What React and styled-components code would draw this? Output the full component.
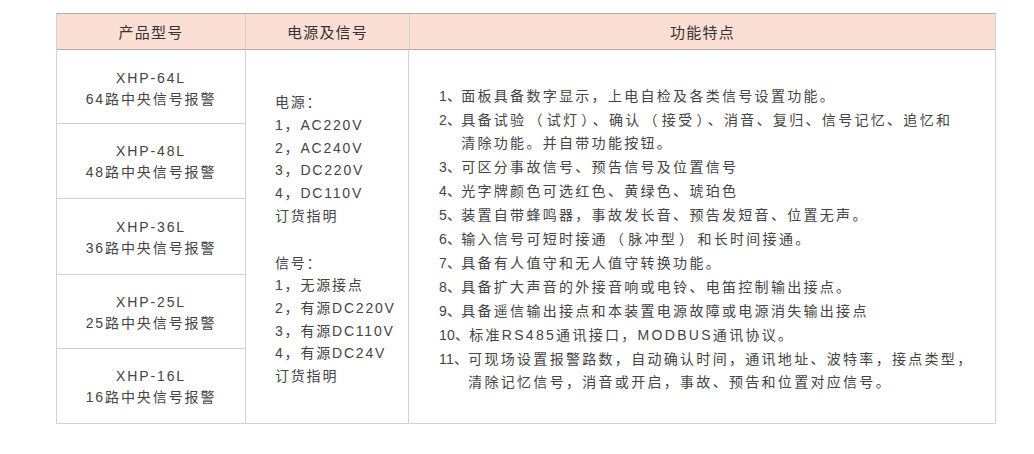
import React from 'react';
import styled, { createGlobalStyle } from 'styled-components';

const GlobalStyle = createGlobalStyle`
    body {
        margin: 0;
        background: #fff;
        font-family: 'Liberation Sans', 'Noto Sans CJK SC', sans-serif;
    }
`;

const Page = styled.div`
    padding: 13px 0 0 56px;
    width: 1034px;
    height: 454px;
    box-sizing: border-box;
`;

const Table = styled.div`
    width: 940px;
    border: 1px solid #d2d2d2;
    border-top-color: #b3aba6;
    box-sizing: border-box;
`;

const Row = styled.div`
    display: grid;
    grid-template-columns: 188px 164px 1fr;
`;

const HeadCell = styled.div`
    height: 35px;
    display: flex;
    align-items: center;
    justify-content: center;
    background: #fcdfd4;
    border-bottom: 1px solid #b3aba6;
    border-left: ${(props) => (props.first ? 'none' : '1px solid #d8cfca')};
    font-size: 15px;
    letter-spacing: 1.2px;
    color: #333;
`;

const ModelCol = styled.div`
    display: flex;
    flex-direction: column;
`;

const ModelCell = styled.div`
    height: ${(props) => props.h}px;
    display: flex;
    flex-direction: column;
    align-items: center;
    justify-content: center;
    border-top: ${(props) => (props.first ? 'none' : '1px solid #d2d2d2')};
    box-sizing: border-box;
    font-size: 14px;
    line-height: 21px;
    letter-spacing: 1.9px;
    color: #444;
    padding-top: ${(props) => (props.first ? 4 : 2)}px;
`;

const PowerCol = styled.div`
    border-left: 1px solid #d2d2d2;
    border-right: 1px solid #d2d2d2;
    display: flex;
    flex-direction: column;
    justify-content: center;
    padding: 6px 0 0 29px;
    font-size: 14px;
    line-height: 22.7px;
    letter-spacing: 1.8px;
    color: #444;
`;

const Line = styled.div`
    height: ${(props) => (props.blank ? '24px' : 'auto')};
    white-space: nowrap;
`;

const FeatureCol = styled.div`
    display: flex;
    flex-direction: column;
    justify-content: center;
    padding: 7px 0 0 30px;
    font-size: 14px;
    line-height: 23.9px;
    letter-spacing: 2.3px;
    color: #444;
`;

const Item = styled.div`
    display: flex;
    white-space: nowrap;
`;

const Num = styled.span`
    flex: none;
    letter-spacing: 0.2px;
`;

const ItemText = styled.div`
    display: flex;
    flex-direction: column;
`;

const Paren = styled.span`
    padding: 0 2px;
`;

const models = [
    ['XHP-64L', '64路中央信号报警', 73],
    ['XHP-48L', '48路中央信号报警', 75],
    ['XHP-36L', '36路中央信号报警', 76],
    ['XHP-25L', '25路中央信号报警', 74],
    ['XHP-16L', '16路中央信号报警', 75],
];

const power = [
    '电源：',
    '1，AC220V',
    '2，AC240V',
    '3，DC220V',
    '4，DC110V',
    '订货指明',
    '',
    '信号：',
    '1，无源接点',
    '2，有源DC220V',
    '3，有源DC110V',
    '4，有源DC24V',
    '订货指明',
];

const features = [
    ['1、', ['面板具备数字显示，上电自检及各类信号设置功能。']],
    ['2、', ['具备试验（试灯）、确认（接受）、消音、复归、信号记忆、追忆和', '清除功能。并自带功能按钮。']],
    ['3、', ['可区分事故信号、预告信号及位置信号']],
    ['4、', ['光字牌颜色可选红色、黄绿色、琥珀色']],
    ['5、', ['装置自带蜂鸣器，事故发长音、预告发短音、位置无声。']],
    ['6、', ['输入信号可短时接通（脉冲型）和长时间接通。']],
    ['7、', ['具备有人值守和无人值守转换功能。']],
    ['8、', ['具备扩大声音的外接音响或电铃、电笛控制输出接点。']],
    ['9、', ['具备遥信输出接点和本装置电源故障或电源消失输出接点']],
    ['10、', ['标准RS485通讯接口，MODBUS通讯协议。']],
    ['11、', ['可现场设置报警路数，自动确认时间，通讯地址、波特率，接点类型，', '清除记忆信号，消音或开启，事故、预告和位置对应信号。']],
];

// give the full-width brackets the extra room they have in the picture
const withParens = (text) =>
    text.split(/([（）])/).map((part, i) => (part === '（' || part === '）' ? <Paren key={i}>{part}</Paren> : part));

export default function App() {
    return (
        <Page>
            <GlobalStyle />
            <Table>
                <Row>
                    <HeadCell first>产品型号</HeadCell>
                    <HeadCell>电源及信号</HeadCell>
                    <HeadCell>功能特点</HeadCell>
                </Row>
                <Row>
                    <ModelCol>
                        {models.map(([code, name, h], i) => (
                            <ModelCell key={code} h={h} first={i === 0}>
                                <div>{code}</div>
                                <div>{name}</div>
                            </ModelCell>
                        ))}
                    </ModelCol>
                    <PowerCol>
                        {power.map((text, i) => (
                            <Line key={i} blank={!text}>
                                {text}
                            </Line>
                        ))}
                    </PowerCol>
                    <FeatureCol>
                        {features.map(([n, lines]) => (
                            <Item key={n}>
                                <Num>{n}</Num>
                                <ItemText>
                                    {lines.map((l) => (
                                        <div key={l}>{withParens(l)}</div>
                                    ))}
                                </ItemText>
                            </Item>
                        ))}
                    </FeatureCol>
                </Row>
            </Table>
        </Page>
    );
}
